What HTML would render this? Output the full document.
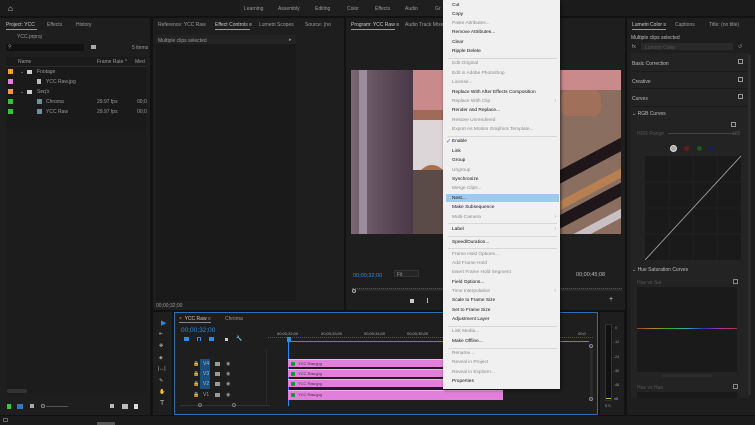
<!DOCTYPE html>
<html><head><meta charset="utf-8">
<style>
*{margin:0;padding:0;box-sizing:border-box}
body{width:755px;height:425px;overflow:hidden;background:#121212;font-family:"Liberation Sans",sans-serif;color:#9a9a9a;font-size:5px;position:relative}
.a{position:absolute}
.panel{position:absolute;background:#1e1e1e}
.t{position:absolute;white-space:nowrap}
.menu{position:absolute;left:443px;top:0;width:117px;height:389px;background:#f0f0f0;box-shadow:1px 1px 3px rgba(0,0,0,.6)}
.mi{position:absolute;left:9px;font-size:4.8px;color:#111;white-space:nowrap}
.mi.g{color:#8a8a8a}
.sep{position:absolute;left:5px;right:3px;height:1px;background:#d8d8d8}
.arr{position:absolute;right:4px;font-size:5px;color:#999}
.clip{position:absolute;left:288px;background:#e17fdb;border-top:1px solid #f2b4ef}
.clip span{position:absolute;left:10px;top:1px;font-size:4px;color:#333}
.clip i{position:absolute;left:3px;top:1.5px;width:4px;height:4px;background:#1e8a1e;border:0.5px solid #0a4}
.sw{position:absolute;left:8px;width:5px;height:5px}
.ico{position:absolute;width:6px;height:6px;background:#aaa}
</style></head><body>
<div class="a" style="left:0;top:0;width:755px;height:16px;background:#1b1b1b"></div>
<div class="a" style="left:240px;top:0;width:203px;height:16px;background:#1f1f1f"></div>
<div class="t" style="left:8px;top:4px;font-size:8px;color:#ddd">&#8962;</div>
<div class="t" style="left:244px;top:6px">Learning</div>
<div class="t" style="left:278px;top:6px">Assembly</div>
<div class="t" style="left:315px;top:6px">Editing</div>
<div class="t" style="left:347px;top:6px">Color</div>
<div class="t" style="left:375px;top:6px">Effects</div>
<div class="t" style="left:405px;top:6px">Audio</div>
<div class="t" style="left:435px;top:6px">Gr</div>

<div class="panel" style="left:0;top:18px;width:150px;height:397px"></div>
<div class="t" style="left:6px;top:22px;color:#ccc">Project: YCC</div>
<div class="a" style="left:6px;top:29px;width:31px;height:1px;background:#999"></div>
<div class="t" style="left:47px;top:22px">Effects</div>
<div class="t" style="left:76px;top:22px">History</div>
<div class="t" style="left:17px;top:34px">YCC.prproj</div>
<div class="a" style="left:6px;top:44px;width:78px;height:7px;background:#121212"></div>
<div class="t" style="left:8px;top:44px">&#9906;</div>
<div class="ico" style="left:91px;top:45px;width:5px;height:4px"></div>
<div class="t" style="left:132px;top:45px">5 items</div>
<div class="a" style="left:6px;top:57px;width:140px;height:72px;background:#1a1a1a"></div>
<div class="t" style="left:18px;top:59px">Name</div>
<div class="t" style="left:97px;top:59px">Frame Rate &#94;</div>
<div class="t" style="left:135px;top:59px">Med</div>
<div class="a" style="left:6px;top:66px;width:140px;height:1px;background:#2a2a2a"></div>
<div class="sw" style="top:69px;background:#f0a030"></div>
<div class="t" style="left:20px;top:69px">&#8964;</div><div class="ico" style="left:27px;top:70px;width:5px;height:4px;background:#ccc"></div><div class="t" style="left:37px;top:69px">Footage</div>
<div class="sw" style="top:79px;background:#e27fe0"></div>
<div class="ico" style="left:37px;top:79px;width:4px;height:5px;background:#bbb"></div><div class="t" style="left:46px;top:79px">YCC Raw.jpg</div>
<div class="sw" style="top:89px;background:#f0a030"></div>
<div class="t" style="left:20px;top:89px">&#8964;</div><div class="ico" style="left:27px;top:90px;width:5px;height:4px;background:#ccc"></div><div class="t" style="left:37px;top:89px">Seq's</div>
<div class="sw" style="top:99px;background:#3dbf3d"></div>
<div class="ico" style="left:37px;top:99px;width:5px;height:5px;background:#6a8fa0"></div><div class="t" style="left:46px;top:99px">Chroma</div><div class="t" style="left:97px;top:99px">29.97 fps</div><div class="t" style="left:137px;top:99px">00;0</div>
<div class="sw" style="top:109px;background:#3dbf3d"></div>
<div class="ico" style="left:37px;top:109px;width:5px;height:5px;background:#6a8fa0"></div><div class="t" style="left:46px;top:109px">YCC Raw</div><div class="t" style="left:97px;top:109px">29.97 fps</div><div class="t" style="left:137px;top:109px">00;0</div>
<div class="a" style="left:6px;top:129px;width:140px;height:266px;background:#1c1c1c"></div>
<div class="a" style="left:7px;top:389px;width:20px;height:4px;background:#333;border-radius:2px"></div>
<div class="a" style="left:7px;top:404px;width:4px;height:5px;background:#3c3"></div>
<div class="a" style="left:17px;top:404px;width:6px;height:5px;background:#2a78c8"></div>
<div class="a" style="left:30px;top:404px;width:4px;height:4px;background:#aaa"></div>
<div class="a" style="left:41px;top:404px;width:4px;height:4px;border:1px solid #888;border-radius:50%"></div>
<div class="a" style="left:46px;top:406px;width:22px;height:1px;background:#555"></div>
<div class="a" style="left:110px;top:404px;width:4px;height:4px;background:#bbb"></div>
<div class="a" style="left:122px;top:404px;width:6px;height:5px;background:#bbb"></div>
<div class="a" style="left:134px;top:404px;width:4px;height:5px;background:#ddd"></div>

<div class="panel" style="left:153px;top:18px;width:191px;height:292px"></div>
<div class="t" style="left:158px;top:22px">Reference: YCC Raw</div>
<div class="t" style="left:215px;top:22px;color:#ccc">Effect Controls &#8801;</div>
<div class="a" style="left:215px;top:29px;width:35px;height:1px;background:#999"></div>
<div class="t" style="left:259px;top:22px">Lumetri Scopes</div>
<div class="t" style="left:305px;top:22px">Source: (no</div>
<div class="a" style="left:156px;top:35px;width:140px;height:266px;background:#1a1a1a"></div>
<div class="a" style="left:156px;top:35px;width:140px;height:9px;background:#232323"></div>
<div class="t" style="left:158px;top:38px">Multiple clips selected</div>
<div class="t" style="left:289px;top:37px">&#9656;</div>
<div class="t" style="left:156px;top:303px">00;00;32;00</div>

<div class="panel" style="left:346px;top:18px;width:279px;height:292px"></div>
<div class="t" style="left:351px;top:22px;color:#ccc">Program: YCC Raw &#8801;</div>
<div class="a" style="left:351px;top:29px;width:44px;height:1px;background:#999"></div>
<div class="t" style="left:405px;top:22px">Audio Track Mixer: Y</div>
<div class="a" style="left:351px;top:70px;width:270px;height:164px;overflow:hidden;background:#b9a8aa">
 <div class="a" style="left:50px;top:0;width:220px;height:45px;background:#c98a8c"></div>
 <div class="a" style="left:50px;top:40px;width:220px;height:10px;background:#a06a58"></div>
 <div class="a" style="left:55px;top:50px;width:160px;height:70px;background:#ddd6d8"></div>
 <div class="a" style="left:66px;top:95px;width:30px;height:32px;border-radius:50%;background:#a86e50"></div>
 <div class="a" style="left:0;top:100px;width:270px;height:64px;background:#5a4a48"></div>
 <div class="a" style="left:150px;top:20px;width:120px;height:144px;background:#8a6e60"></div>
 <div class="a" style="left:210px;top:20px;width:40px;height:26px;border-radius:8px;background:#a0705a"></div>
 <div class="a" style="left:140px;top:55px;width:40px;height:30px;border-radius:8px;background:#a87258"></div>
 <div class="a" style="left:120px;top:95px;width:200px;height:12px;background:#1e1618;transform:rotate(-28deg)"></div>
 <div class="a" style="left:110px;top:140px;width:220px;height:12px;background:#1e1618;transform:rotate(-28deg)"></div>
 <div class="a" style="left:180px;top:115px;width:120px;height:8px;background:#b88050;transform:rotate(-28deg)"></div>
 <div class="a" style="left:200px;top:150px;width:100px;height:8px;background:#c8c0c2;transform:rotate(-28deg)"></div>
 <div class="a" style="left:0;top:0;width:62px;height:164px;background:linear-gradient(90deg,#7a6876,#5d4a5a 55%,#4a3846)"></div>
 <div class="a" style="left:8px;top:0;width:8px;height:164px;background:#9a8c9a"></div>
</div>
<div class="t" style="left:353px;top:273px;color:#2d8ceb;font-size:5.5px">00;00;32;00</div>
<div class="a" style="left:394px;top:270px;width:25px;height:7px;background:#252525;border:1px solid #333"></div>
<div class="t" style="left:397px;top:272px">Fit</div>
<div class="t" style="left:576px;top:272px;color:#bbb;font-size:5.5px">00;00;45;08</div>
<div class="a" style="left:352px;top:288px;width:270px;height:3px;background:#2a2a2a;border-top:1px dotted #555"></div>
<div class="a" style="left:352px;top:289px;width:4px;height:4px;border-radius:50%;border:1px solid #aaa"></div>
<div class="a" style="left:410px;top:299px;width:4px;height:4px;background:#ccc"></div>
<div class="a" style="left:427px;top:298px;width:1px;height:5px;background:#bbb"></div>
<div class="t" style="left:609px;top:296px;color:#ccc;font-size:7px">+</div>

<div class="panel" style="left:627px;top:18px;width:128px;height:397px"></div>
<div class="t" style="left:632px;top:22px;color:#ccc">Lumetri Color &#8801;</div>
<div class="a" style="left:632px;top:29px;width:34px;height:1px;background:#999"></div>
<div class="t" style="left:675px;top:22px">Captions</div>
<div class="t" style="left:709px;top:22px">Title: (no title)</div>
<div class="t" style="left:631px;top:35px;color:#bbb">Multiple clips selected</div>
<div class="t" style="left:632px;top:44px">fx</div>
<div class="a" style="left:641px;top:43px;width:92px;height:7px;background:#2a2a2a"></div>
<div class="t" style="left:645px;top:45px;color:#555">Lumetri Color</div>
<div class="t" style="left:738px;top:44px;color:#999">&#8634;</div>
<div class="a" style="left:631px;top:53px;width:118px;height:345px;background:#232323"></div>
<div class="a" style="left:748px;top:55px;width:3px;height:340px;background:#2c2c2c"></div>
<div class="t" style="left:632px;top:61px;color:#bbb">Basic Correction</div>
<div class="t" style="left:632px;top:79px;color:#bbb">Creative</div>
<div class="t" style="left:632px;top:96px;color:#bbb">Curves</div>
<div class="a" style="left:631px;top:71px;width:117px;height:1px;background:#1b1b1b"></div>
<div class="a" style="left:631px;top:88px;width:117px;height:1px;background:#1b1b1b"></div>
<div class="a" style="left:631px;top:106px;width:117px;height:1px;background:#1b1b1b"></div>
<div class="a" style="left:738px;top:59px;width:5px;height:5px;border:1px solid #999"></div>
<div class="a" style="left:738px;top:77px;width:5px;height:5px;border:1px solid #999"></div>
<div class="a" style="left:738px;top:94px;width:5px;height:5px;border:1px solid #999"></div>
<div class="t" style="left:632px;top:111px;color:#bbb">&#8964; RGB Curves</div>
<div class="a" style="left:731px;top:122px;width:5px;height:5px;border:1px solid #999"></div>
<div class="t" style="left:637px;top:131px;color:#555">HDR Range</div>
<div class="a" style="left:668px;top:133px;height:1px;background:#444;width:68px"></div>
<div class="t" style="left:732px;top:131px;color:#555">100</div>
<div class="a" style="left:670px;top:145px;width:7px;height:7px;border-radius:50%;background:#aaa;border:1px solid #ddd"></div>
<div class="a" style="left:684px;top:146px;width:5px;height:5px;border-radius:50%;background:#6a1a1a"></div>
<div class="a" style="left:697px;top:146px;width:5px;height:5px;border-radius:50%;background:#1a5a1a"></div>
<div class="a" style="left:709px;top:146px;width:5px;height:5px;border-radius:50%;background:#1a1a6a"></div>
<div class="a" style="left:645px;top:156px;width:96px;height:104px;background:#1a1a1a;overflow:hidden">
<svg width="96" height="104" style="position:absolute;left:0;top:0"><g stroke="#262626" stroke-width=".5"><line x1="24" y1="0" x2="24" y2="104"/><line x1="48" y1="0" x2="48" y2="104"/><line x1="72" y1="0" x2="72" y2="104"/><line x1="0" y1="26" x2="96" y2="26"/><line x1="0" y1="52" x2="96" y2="52"/><line x1="0" y1="78" x2="96" y2="78"/></g><line x1="0" y1="104" x2="96" y2="0" stroke="#aaa" stroke-width=".8"/></svg>
</div>
<div class="t" style="left:632px;top:267px;color:#bbb">&#8964; Hue Saturation Curves</div>
<div class="t" style="left:637px;top:280px;color:#555">Hue vs Sat</div>
<div class="a" style="left:733px;top:279px;width:5px;height:5px;border:1px solid #888"></div>
<div class="a" style="left:637px;top:287px;width:100px;height:85px;background:#1a1a1a"></div>
<div class="a" style="left:637px;top:328px;width:100px;height:1px;background:linear-gradient(90deg,#a33,#a83,#3a3,#3aa,#33a,#a3a,#a33)"></div>
<div class="a" style="left:662px;top:374px;width:50px;height:3px;background:#2c2c2c"></div>
<div class="t" style="left:637px;top:385px;color:#555">Hue vs Hue</div>
<div class="a" style="left:733px;top:384px;width:5px;height:5px;border:1px solid #888"></div>
<div class="a" style="left:637px;top:392px;width:100px;height:6px;background:#1a1a1a"></div>

<div class="panel" style="left:153px;top:312px;width:19px;height:103px"></div>
<div class="t" style="left:161px;top:319px;color:#2d8ceb;font-size:7px">&#9654;</div>
<div class="t" style="left:159px;top:331px;color:#bbb">&#8676;</div>
<div class="t" style="left:159px;top:343px;color:#bbb">&#10021;</div>
<div class="t" style="left:159px;top:355px;color:#bbb">&#9672;</div>
<div class="t" style="left:158px;top:366px;color:#bbb">|&#8596;|</div>
<div class="t" style="left:159px;top:378px;color:#bbb">&#9998;</div>
<div class="t" style="left:159px;top:389px;color:#bbb">&#9995;</div>
<div class="t" style="left:160px;top:400px;color:#bbb;font-size:7px">T</div>

<div class="panel" style="left:174px;top:312px;width:424px;height:103px;border:1px solid #2d6fb0"></div>
<div class="t" style="left:179px;top:316px">×&nbsp; <span style="color:#ccc">YCC Raw</span> &#8801;</div>
<div class="a" style="left:179px;top:322px;width:32px;height:1px;background:#888"></div>
<div class="t" style="left:225px;top:316px">Chroma</div>
<div class="t" style="left:181px;top:327px;color:#2d8ceb;font-size:6.5px">00;00;32;00</div>
<div class="a" style="left:184px;top:337px;width:5px;height:4px;background:#2d8ceb"></div>
<div class="a" style="left:197px;top:337px;width:4px;height:4px;border:1px solid #2d8ceb;border-bottom:none"></div>
<div class="a" style="left:209px;top:337px;width:5px;height:4px;background:#2d8ceb"></div>
<div class="a" style="left:225px;top:338px;width:3px;height:3px;background:#ccc"></div>
<div class="t" style="left:236px;top:336px;color:#bbb">&#128295;</div>
<div class="t" style="left:277px;top:331px;color:#aaa;font-size:4px">00;00;32;00</div>
<div class="t" style="left:321px;top:331px;color:#aaa;font-size:4px">00;00;33;00</div>
<div class="t" style="left:364px;top:331px;color:#aaa;font-size:4px">00;00;34;00</div>
<div class="t" style="left:407px;top:331px;color:#aaa;font-size:4px">00;00;35;00</div>
<div class="t" style="left:578px;top:331px;color:#aaa;font-size:4px">00;0</div>
<div class="a" style="left:268px;top:337px;width:325px;height:3px;border-top:1px dotted #555"></div>
<div class="a" style="left:289px;top:341px;width:300px;height:1px;background:#8a8a20"></div>
<div class="a" style="left:287px;top:337px;width:4px;height:5px;background:#2d8ceb"></div>
<div class="a" style="left:288px;top:342px;width:1px;height:64px;background:#2d8ceb"></div>
<div class="a" style="left:266px;top:350px;width:1px;height:55px;background:#2a2a2a"></div>
<div class="a" style="left:200px;top:359px;width:10px;height:30px;background:#1d4f7c"></div>
<div class="t" style="left:193px;top:361px;color:#aaa">&#128274;</div><div class="t" style="left:203px;top:361px;color:#9bd">V4</div><div class="ico" style="left:215px;top:362px;width:5px;height:4px;background:#999"></div><div class="t" style="left:226px;top:361px">&#9673;</div>
<div class="t" style="left:193px;top:371px;color:#aaa">&#128274;</div><div class="t" style="left:203px;top:371px;color:#9bd">V3</div><div class="ico" style="left:215px;top:372px;width:5px;height:4px;background:#999"></div><div class="t" style="left:226px;top:371px">&#9673;</div>
<div class="t" style="left:193px;top:381px;color:#aaa">&#128274;</div><div class="t" style="left:203px;top:381px;color:#9bd">V2</div><div class="ico" style="left:215px;top:382px;width:5px;height:4px;background:#999"></div><div class="t" style="left:226px;top:381px">&#9673;</div>
<div class="t" style="left:193px;top:392px;color:#aaa">&#128274;</div><div class="t" style="left:203px;top:392px">V1</div><div class="ico" style="left:215px;top:393px;width:5px;height:4px;background:#999"></div><div class="t" style="left:226px;top:392px">&#9673;</div>
<div class="a" style="left:180px;top:405px;width:90px;height:1px;background:#333"></div>
<div class="a" style="left:198px;top:403px;width:4px;height:4px;border-radius:50%;border:1px solid #777"></div>
<div class="a" style="left:232px;top:403px;width:4px;height:4px;border-radius:50%;border:1px solid #777"></div>
<div class="clip" style="top:359px;width:215px;height:8px"><i></i><span>YCC Raw.jpg</span></div>
<div class="clip" style="top:369px;width:215px;height:8px"><i></i><span>YCC Raw.jpg</span></div>
<div class="clip" style="top:379px;width:215px;height:8px"><i></i><span>YCC Raw.jpg</span></div>
<div class="clip" style="top:390px;width:215px;height:10px"><i></i><span>YCC Raw.jpg</span></div>
<div class="a" style="left:590px;top:345px;width:3px;height:55px;background:#2a2a2a"></div>
<div class="a" style="left:589px;top:344px;width:4px;height:4px;border-radius:50%;border:1px solid #888"></div>
<div class="a" style="left:589px;top:397px;width:4px;height:4px;border-radius:50%;border:1px solid #888"></div>
<div class="panel" style="left:600px;top:312px;width:24px;height:103px"></div>
<div class="a" style="left:605px;top:324px;width:7px;height:77px;background:#111;border:1px solid #333"></div>
<div class="a" style="left:606px;top:398px;width:5px;height:1px;background:#bb3"></div>
<div class="t" style="left:615px;top:326px;font-size:3.5px">0</div>
<div class="t" style="left:614px;top:340px;font-size:3.5px">-12</div>
<div class="t" style="left:614px;top:355px;font-size:3.5px">-24</div>
<div class="t" style="left:614px;top:369px;font-size:3.5px">-36</div>
<div class="t" style="left:614px;top:383px;font-size:3.5px">-48</div>
<div class="t" style="left:614px;top:397px;font-size:3.5px">dB</div>
<div class="t" style="left:605px;top:404px;font-size:3.5px">S S</div>
<div class="a" style="left:0;top:416px;width:755px;height:9px;background:#1b1b1b"></div>
<div class="a" style="left:3px;top:418px;width:5px;height:4px;border:1px solid #666"></div>
<div class="a" style="left:97px;top:422px;width:18px;height:3px;background:#555"></div>

<div class="menu">
<div class="mi" style="top:3px">Cut</div>
<div class="mi" style="top:12px">Copy</div>
<div class="mi g" style="top:21px">Paste Attributes...</div>
<div class="mi" style="top:30px">Remove Attributes...</div>
<div class="mi" style="top:40px">Clear</div>
<div class="mi" style="top:49px">Ripple Delete</div>
<div class="sep" style="top:58px"></div>
<div class="mi g" style="top:61px">Edit Original</div>
<div class="mi g" style="top:71px">Edit in Adobe Photoshop</div>
<div class="mi g" style="top:80px">License...</div>
<div class="mi" style="top:90px">Replace With After Effects Composition</div>
<div class="mi g" style="top:99px">Replace With Clip</div><div class="arr" style="top:98px">&#8250;</div>
<div class="mi" style="top:108px">Render and Replace...</div>
<div class="mi g" style="top:118px">Restore Unrendered</div>
<div class="mi g" style="top:127px">Export As Motion Graphics Template...</div>
<div class="sep" style="top:136px"></div>
<div class="t" style="left:3px;top:138px;color:#2d7ad0;font-size:6px">&#10003;</div>
<div class="mi" style="top:139px">Enable</div>
<div class="mi" style="top:149px">Link</div>
<div class="mi" style="top:158px">Group</div>
<div class="mi g" style="top:168px">Ungroup</div>
<div class="mi" style="top:177px">Synchronize</div>
<div class="mi g" style="top:186px">Merge Clips...</div>
<div class="a" style="left:3px;top:194px;width:113px;height:8px;background:#9ccaf2"></div>
<div class="mi" style="top:196px">Nest...</div>
<div class="mi" style="top:205px">Make Subsequence</div>
<div class="mi g" style="top:215px">Multi-Camera</div><div class="arr" style="top:214px">&#8250;</div>
<div class="sep" style="top:223px"></div>
<div class="mi" style="top:227px">Label</div><div class="arr" style="top:226px">&#8250;</div>
<div class="sep" style="top:236px"></div>
<div class="mi" style="top:240px">Speed/Duration...</div>
<div class="sep" style="top:248px"></div>
<div class="mi g" style="top:252px">Frame Hold Options...</div>
<div class="mi g" style="top:261px">Add Frame Hold</div>
<div class="mi g" style="top:270px">Insert Frame Hold Segment</div>
<div class="mi" style="top:280px">Field Options...</div>
<div class="mi g" style="top:289px">Time Interpolation</div><div class="arr" style="top:288px">&#8250;</div>
<div class="mi" style="top:298px">Scale to Frame Size</div>
<div class="mi" style="top:308px">Set to Frame Size</div>
<div class="mi" style="top:317px">Adjustment Layer</div>
<div class="sep" style="top:326px"></div>
<div class="mi g" style="top:329px">Link Media...</div>
<div class="mi" style="top:339px">Make Offline...</div>
<div class="sep" style="top:348px"></div>
<div class="mi g" style="top:351px">Rename...</div>
<div class="mi g" style="top:360px">Reveal in Project</div>
<div class="mi g" style="top:370px">Reveal in Explorer...</div>
<div class="mi" style="top:379px">Properties</div>
</div>
</body></html>
